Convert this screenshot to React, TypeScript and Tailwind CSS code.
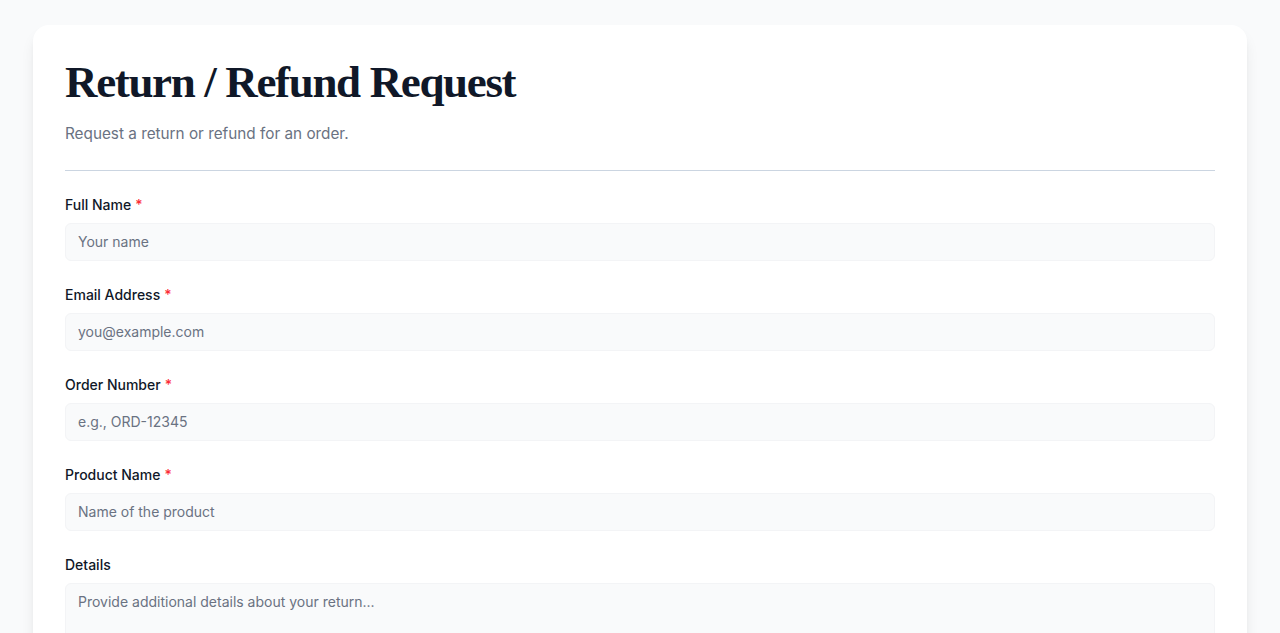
import React from "react";

const fields = [
  { label: "Full Name", placeholder: "Your name", required: true },
  { label: "Email Address", placeholder: "you@example.com", required: true },
  { label: "Order Number", placeholder: "e.g., ORD-12345", required: true },
  { label: "Product Name", placeholder: "Name of the product", required: true },
];

export default function App() {
  return (
    <div className="min-h-screen bg-gray-50 px-[33px] pt-[25px] pb-10" style={{ fontFamily: "Inter, 'Noto Sans', sans-serif" }}>
      <div className="rounded-2xl bg-white p-8 shadow-lg">
        <h1 className="text-[45px] font-bold leading-[50px] tracking-[-0.03em] text-gray-900" style={{ fontFamily: "'Liberation Serif', 'Times New Roman', serif" }}>
          Return / Refund Request
        </h1>
        <p className="mt-[15px] text-[15.3px] leading-6 text-gray-500">Request a return or refund for an order.</p>
        <div className="mt-6 border-t border-[#cbd5e1]" />
        <form className="flex flex-col gap-6 pt-6">
          {fields.map((f) => (
            <div key={f.label} className="flex flex-col">
              <label className="mb-2 text-sm font-medium leading-5 text-gray-900">
                {f.label}
                {f.required && <span className="ml-1 text-red-500">*</span>}
              </label>
              <input
                className="w-full rounded-md border border-gray-100 bg-gray-50 px-3 py-2 text-sm leading-5 text-gray-900 placeholder:text-gray-500 outline-none"
                placeholder={f.placeholder}
              />
            </div>
          ))}
          <div className="flex flex-col">
            <label className="mb-2 text-sm font-medium leading-5 text-gray-900">Details</label>
            <textarea
              rows={4}
              className="w-full resize-none rounded-md border border-gray-100 bg-gray-50 px-3 py-2 text-sm leading-5 text-gray-900 placeholder:text-gray-500 outline-none"
              placeholder="Provide additional details about your return..."
            />
          </div>
        </form>
      </div>
    </div>
  );
}
